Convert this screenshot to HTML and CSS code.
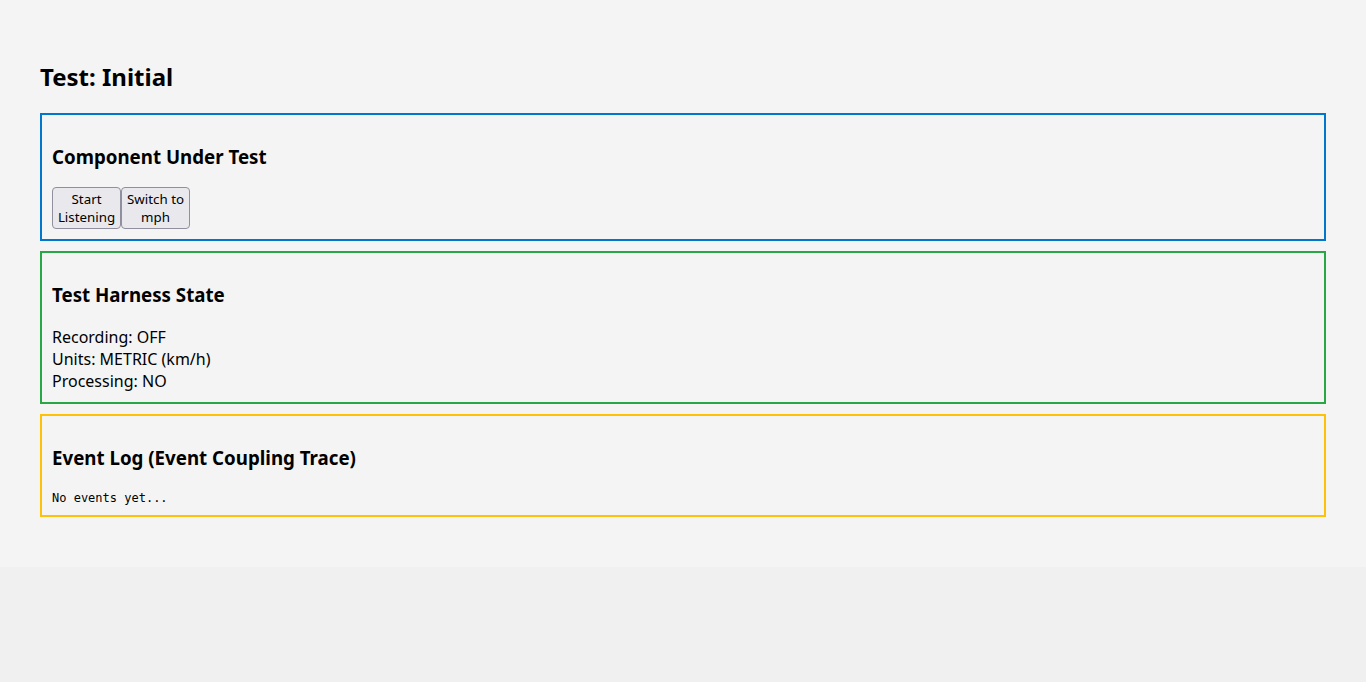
FILE: index.html
```html
<!DOCTYPE html>
<html lang="en">
<head>
    <meta charset="UTF-8">
    <meta name="viewport" content="width=device-width, initial-scale=1.0">
    <title>Test: Initial</title>
    <link rel="stylesheet" href="styles.css">
</head>
<body>

    <div class="test-page">
        <h2>Test: Initial</h2>

        <div class="panel panel-component">
            <h3>Component Under Test</h3>
            <div class="controls">
                <button>Start Listening</button>
                <button>Switch to mph</button>
            </div>
        </div>

        <div class="panel panel-state">
            <h3>Test Harness State</h3>
            <div>Recording: OFF</div>
            <div>Units: METRIC (km/h)</div>
            <div>Processing: NO</div>
        </div>

        <div class="panel panel-log">
            <h3>Event Log (Event Coupling Trace)</h3>
            <pre class="log">No events yet...</pre>
        </div>
    </div>

</body>
</html>
```

FILE: styles.css
```css
body {
    margin: 0;
    font-family: "Noto Sans", sans-serif;
    background-color: #f0f0f0;
    color: #000;
}
.test-page {
    background-color: #f4f4f4;
    padding: 40px;
}
h2 {
    font-size: 24px;
    margin: 20px 0;
}
h3 {
    font-size: 18.72px;
    margin: 18.72px 0;
}
.panel {
    padding: 10px;
    margin-bottom: 10px;
    border: 2px solid #ccc;
}
.panel-component {
    border-color: #0077cc;
}
.panel-state {
    border-color: #28a745;
}
.panel-log {
    border-color: #ffc107;
}
.controls {
    display: flex;
}
.controls button {
    width: 69px;
    font-family: "Noto Sans", sans-serif;
    font-size: 13.33px;
    line-height: 18px;
    padding: 2px 4px;
    color: #000;
    background-color: #e9e9ed;
    border: 1px solid #8f8f9d;
    border-radius: 4px;
}
.log {
    font-family: "DejaVu Sans Mono", monospace;
    font-size: 12px;
    margin: 0;
    padding-top: 3px;
}
```
